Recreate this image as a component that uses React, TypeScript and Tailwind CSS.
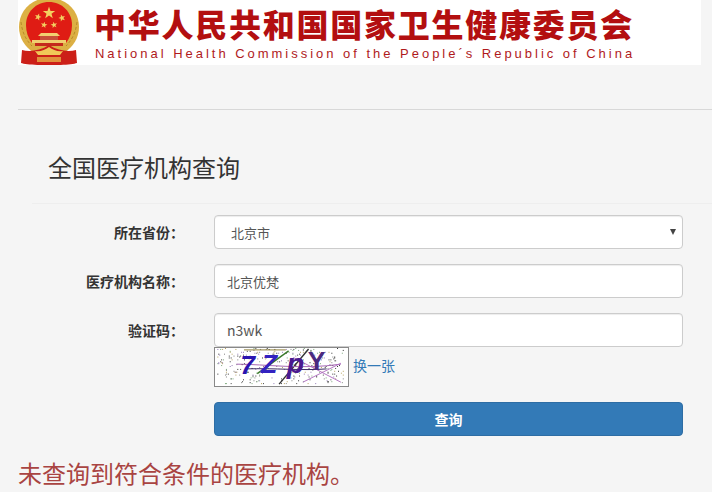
import React from 'react';

const CJK = 'font-["Noto_Sans_CJK_SC",sans-serif]';

// small deterministic noise for the captcha
let seed = 7;
const rnd = (n: number) => {
  seed = (seed * 1103515245 + 12345) % 2147483648;
  return Math.floor((seed / 2147483648) * n);
};
const noise = Array.from({ length: 300 }, (_, i) => ({
  x: rnd(133),
  y: rnd(38),
  c: ['#222222', '#777777', '#b09a50', '#8a70b0', '#70a070', '#333333'][i % 6],
}));

const star = (cx: number, cy: number, r: number, rot = 0) => {
  const pts: string[] = [];
  for (let i = 0; i < 10; i++) {
    const rad = i % 2 === 0 ? r : r * 0.4;
    const a = (Math.PI / 5) * i - Math.PI / 2 + rot;
    pts.push(`${(cx + rad * Math.cos(a)).toFixed(1)},${(cy + rad * Math.sin(a)).toFixed(1)}`);
  }
  return pts.join(' ');
};

const Emblem = () => (
  <svg width="62" height="65" viewBox="0 0 62 65" className="shrink-0">
    <path d="M31 -2C12 -2 1 12 1 27c0 11 6 20 14 25h32c8-5 14-14 14-25C61 12 50 -2 31 -2z" fill="#dcb044" />
    <path d="M3 22c1 9 4 17 11 24M59 22c-1 9-4 17-11 24" stroke="#b88a28" strokeWidth="1" fill="none" strokeDasharray="3 2" />
    <path d="M31 2C18 2 8 12 8 25c0 7 2 13 6 18h34c4-5 6-11 6-18C54 12 44 2 31 2z" fill="#df1c14" />
    <polygon points={star(31, 13, 6.5)} fill="#f3d060" />
    <polygon points={star(20, 17, 3.6, 0.3)} fill="#f3d060" />
    <polygon points={star(44, 18, 3.6, -0.3)} fill="#f3d060" />
    <polygon points={star(26, 25, 3.4, 0.2)} fill="#f3d060" />
    <polygon points={star(36, 25, 3.4, -0.2)} fill="#f3d060" />
    <path d="M23 33h16l3 3H20z" fill="#f2d070" />
    <path d="M22 36h18v4H22z" fill="#c8503a" />
    <path d="M14 40h34v3H14z" fill="#f0cf70" />
    <path d="M17 43h28v3H17z" fill="#c42a1c" />
    <path d="M4 50c7 2 18 1 27-5 9 6 20 7 27 5l1 13c-8 3-48 3-56 0z" fill="#cc1f18" />
    <path d="M17 51c5 1 10-1 14-4 4 3 9 5 14 4l-3 4H20z" fill="#f0c858" />
    <path d="M19 57h24v5H19z" fill="#e8b848" opacity="0.75" />
  </svg>
);

const Captcha = () => (
  <svg width="135" height="40" viewBox="0 0 135 40" className="block shrink-0 border border-[#888888] bg-white">
    {noise.map((d, i) => (
      <rect key={i} x={d.x} y={d.y} width="1" height="1" fill={d.c} />
    ))}
    <path d="M28 2h44" stroke="#8a7a30" strokeWidth="1" />
    <path d="M42 27L75 3" stroke="#3a7a2a" strokeWidth="1.5" />
    <path d="M65 38L96 1" stroke="#333333" strokeWidth="1.5" />
    <path d="M20 17c30 0 70 6 110 0" stroke="#a060b0" strokeWidth="1" fill="none" />
    <path d="M30 22c30-1 60 2 85 0" stroke="#30205a" strokeWidth="1" fill="none" />
    <path d="M80 10L130 36" stroke="#b070c0" strokeWidth="1" />
    <path d="M90 36L130 16" stroke="#b070c0" strokeWidth="1" />
    <text x="24" y="27" fill="#2a14b0" fontSize="28" fontStyle="italic" fontWeight="700" fontFamily="Liberation Sans">7</text>
    <text x="46" y="26" fill="#3322c0" fontSize="28" fontStyle="italic" fontWeight="700" fontFamily="Liberation Sans">Z</text>
    <text x="73" y="26" fill="#4a1a90" fontSize="30" fontStyle="italic" fontWeight="700" fontFamily="Liberation Sans">p</text>
    <text x="95" y="23" fill="#4a2a80" fontSize="28" fontWeight="700" fontFamily="Liberation Sans">Y</text>
  </svg>
);

const Row = ({ label, children }: { label: string; children: React.ReactNode }) => (
  <div className="flex h-[34px] items-start">
    <label className="w-[184px] pt-[7px] text-right text-[14px] leading-[20px] font-bold whitespace-nowrap text-[#333333]">
      {label}
    </label>
    <div className="ml-[30px] w-[469px]">{children}</div>
  </div>
);

export default function App() {
  return (
    <div className={`h-[492px] w-[712px] overflow-hidden bg-[#f5f5f5] ${CJK}`}>
      <div className="ml-[18px] flex h-[65px] w-[683px] items-start bg-white">
        <Emblem />
        <div className="ml-[14px] flex flex-col">
          <div className="mt-[4px] text-[32px] leading-[38px] font-black tracking-[1.75px] whitespace-nowrap text-[#b30f10]">
            中华人民共和国国家卫生健康委员会
          </div>
          <div className="mt-[4px] ml-[1px] font-['Liberation_Sans',sans-serif] text-[13px] leading-[16px] tracking-[2.98px] whitespace-nowrap text-[#b01a1c]">
            National Health Commission of the People´s Republic of China
          </div>
        </div>
      </div>

      <hr className="mt-[44px] ml-[18px] border-t border-[#d8d8d8]" />

      <h1 className="mt-[40px] ml-[48px] text-[24px] leading-[34px] font-normal text-[#333333]">全国医疗机构查询</h1>
      <hr className="mt-[19px] ml-[32px] border-t border-[#eeeeee]" />

      <div className="mt-[11px] flex flex-col gap-[15px]">
        <Row label="所在省份：">
          <div className="relative flex h-[34px] items-center rounded border border-[#cccccc] bg-white pt-[2px] pl-[16px] text-[13px] text-[#555555] shadow-[inset_0_1px_1px_rgba(0,0,0,0.075)]">
            北京市
            <span className="absolute top-[13px] right-[6px] h-0 w-0 border-x-[3px] border-t-[6px] border-x-transparent border-t-[#444444]" />
          </div>
        </Row>
        <Row label="医疗机构名称：">
          <input
            readOnly
            value="北京优梵"
            className="block h-[34px] w-full rounded border border-[#cccccc] bg-white px-[12px] text-[13px] text-[#555555] shadow-[inset_0_1px_1px_rgba(0,0,0,0.075)] outline-none"
          />
        </Row>
        <Row label="验证码：">
          <input
            readOnly
            value="n3wk"
            className="block h-[34px] w-full rounded border border-[#cccccc] bg-white px-[12px] text-[14px] text-[#555555] shadow-[inset_0_1px_1px_rgba(0,0,0,0.075)] outline-none"
          />
        </Row>
      </div>

      <div className="ml-[214px] flex items-center">
        <Captcha />
        <a className="mb-[3px] ml-[4px] text-[14px] text-[#337ab7]">换一张</a>
      </div>

      <button className="mt-[15px] ml-[214px] block h-[34px] w-[469px] rounded border border-[#2e6da4] bg-[#337ab7] text-[14px] font-bold text-white">
        查询
      </button>

      <div className="mt-[20px] ml-[18px] text-[24px] leading-[34px] text-[#a94442]">未查询到符合条件的医疗机构。</div>
    </div>
  );
}
